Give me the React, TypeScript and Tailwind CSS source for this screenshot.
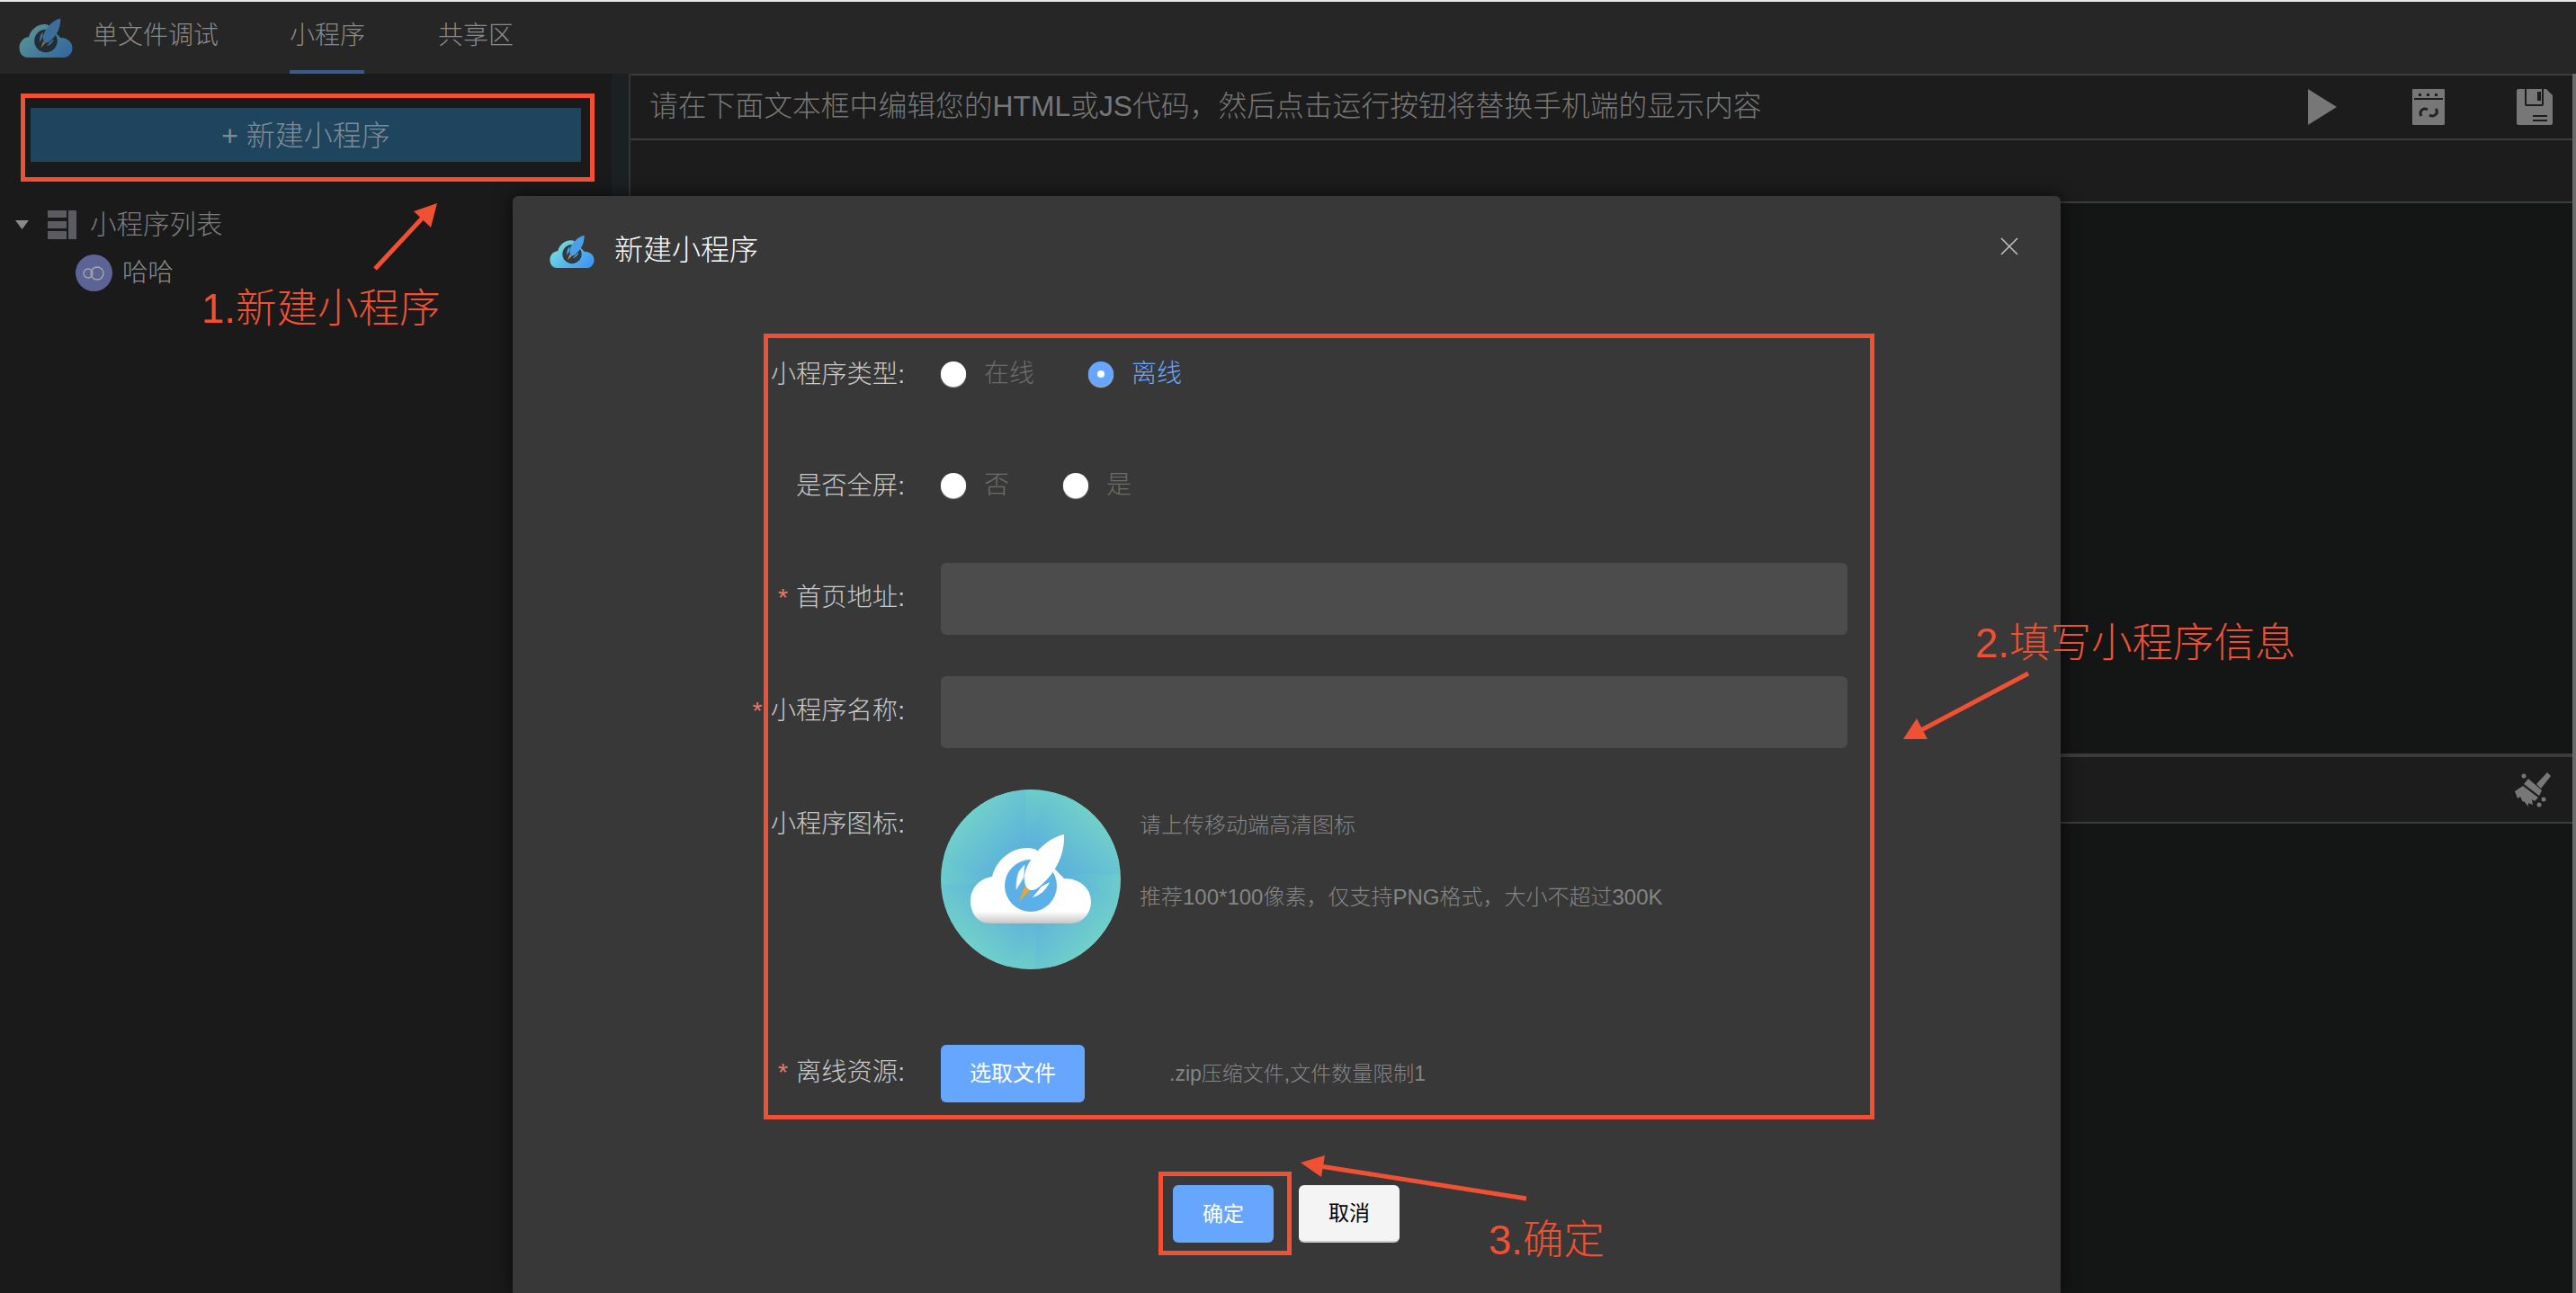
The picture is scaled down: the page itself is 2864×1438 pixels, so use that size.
import React from "react";

const CLOUD =
  "M55 149 C40 149 33 137 33 124 C33 110 43 99 57 97 C62 78 78 65 97 65 C100 65 104 66 106 67 L137 99 C155 99 167 110 167 125 C167 139 156 149 145 149 Z";
const ROCKET =
  "M137 50 C120 54 104 68 95 88 C92 96 92 104 96 110 C100 114 106 112 112 106 C128 92 138 72 137 50 Z";
const FIN_LEFT = "M93 84 L87 91 C84 99 84 105 84 111 L92 98 Z";
const FIN_RIGHT = "M102 120 C110 118 117 112 121 103 L112 108 Z";
const FLAME = "M87 125 L93 108 L99 112 Z";
const PETAL = "M3 75 C20 92 45 97 70 95 C82 95 92 97 100 100 C96 82 92 65 94 50 C94 30 95 15 94 2 L0 0 Z";

// small cloud logo used in the header and dialog title
const Logo = ({ id, className, hole }: { id: string; className: string; hole: string }) => (
  <svg viewBox="33 40 134 109" className={className}>
    <defs>
      <linearGradient id={id} x1="0" y1="0.2" x2="1" y2="0.8">
        <stop offset="0" stopColor="#7ee4d6" />
        <stop offset="0.55" stopColor="#58b4ec" />
        <stop offset="1" stopColor="#3d96f2" />
      </linearGradient>
    </defs>
    <path d={CLOUD} fill={`url(#${id})`} />
    <circle cx="100" cy="107" r="29" fill={hole} />
    <path d={ROCKET} fill="#4b9fe6" />
    <path d={FIN_LEFT} fill="#4b9fe6" />
    <path d={FIN_RIGHT} fill="#4b9fe6" />
    <path d={FLAME} fill="#e89a3c" />
  </svg>
);

const BigIcon = () => (
  <svg viewBox="0 0 200 200" className="w-[200px] h-[200px] shrink-0">
    <defs>
      <linearGradient id="petal" gradientUnits="userSpaceOnUse" x1="88" y1="92" x2="22" y2="30">
        <stop offset="0" stopColor="#57abe0" />
        <stop offset="1" stopColor="#72d2c8" />
      </linearGradient>
      <radialGradient id="discBase" cx="0.5" cy="0.5" r="0.5">
        <stop offset="0.2" stopColor="#57abe0" />
        <stop offset="1" stopColor="#6ccdca" />
      </radialGradient>
      <linearGradient id="cloudShade" x1="0" y1="0" x2="0" y2="1">
        <stop offset="0.84" stopColor="#ffffff" />
        <stop offset="1" stopColor="#c6c6c6" />
      </linearGradient>
      <clipPath id="disc">
        <circle cx="100" cy="100" r="100" />
      </clipPath>
    </defs>
    <g clipPath="url(#disc)">
      <rect width="200" height="200" fill="url(#discBase)" />
      <path d={PETAL} fill="url(#petal)" />
      <path d={PETAL} fill="url(#petal)" transform="rotate(90 100 100)" />
      <path d={PETAL} fill="url(#petal)" transform="rotate(180 100 100)" />
      <path d={PETAL} fill="url(#petal)" transform="rotate(270 100 100)" />
    </g>
    <path d={CLOUD} fill="url(#cloudShade)" />
    <circle cx="100" cy="107" r="29" fill="#5cb0e8" />
    <path d={FIN_LEFT} fill="#ffffff" stroke="#d4ebfa" strokeWidth="0.8" />
    <path d={FIN_RIGHT} fill="#ffffff" />
    <path d={ROCKET} fill="#ffffff" />
    <path d={FLAME} fill="#e2a63f" />
  </svg>
);

const Radio = ({ checked, label, className }: { checked?: boolean; label: string; className: string }) => (
  <div className={`flex items-center ${className}`}>
    <span
      className={`w-[28px] h-[28px] rounded-full flex items-center justify-center shadow-[0_1px_1px_#bbbbbb] ${
        checked ? "bg-[#66a6ff]" : "bg-white"
      }`}
    >
      {checked && <span className="w-[8px] h-[8px] rounded-full bg-white" />}
    </span>
    <span className={`ml-[20px] text-[28px] ${checked ? "text-[#66a6ff]" : "text-[#6c6c6c]"}`}>{label}</span>
  </div>
);

const Label = ({ text, required, lead }: { text: string; required?: boolean; lead: string }) => (
  <div className={`w-[476px] shrink-0 pr-[40px] text-right text-[28.3px] text-[#c9c9c9] ${lead}`}>
    {required && <span className="mr-[9px] text-[#ee7468]">*</span>}
    {text}:
  </div>
);

const App = () => {
  return (
    <div
      className="relative w-[2864px] h-[1438px] overflow-hidden bg-[#1a1a1a] flex flex-col font-light"
      style={{ fontFamily: '"Liberation Sans", "Noto Sans CJK SC", sans-serif' }}
    >
      <div className="h-[2px] bg-[#e8e8ea]" />
      {/* top nav */}
      <div className="h-[80px] bg-[#262626] flex">
        <Logo id="navLogo" hole="#22303a" className="ml-[20px] mt-[14px] w-[62px] h-[48px] opacity-60" />
        <div className="ml-[21px] w-[219px] leading-[76px] text-[28px] text-[#8a8a8a]">单文件调试</div>
        <div className="w-[83px] h-[80px] border-b-[4px] border-[#3a5a8c] leading-[76px] text-[28px] text-[#8a8a8a] whitespace-nowrap">小程序</div>
        <div className="ml-[82px] leading-[76px] text-[28px] text-[#8a8a8a]">共享区</div>
      </div>

      <div className="flex flex-1 min-h-0">
        {/* left tree */}
        <div className="w-[680px] flex flex-col">
          <div className="ml-[34px] mt-[38px] w-[612px] h-[60px] pt-[2px] bg-[#1f445e] flex items-center justify-center text-[32px] text-[#7d8c96]">
            + 新建小程序
          </div>
          <div className="mt-[52px] flex items-center h-[36px]">
            <svg viewBox="0 0 15 10" className="ml-[17px] w-[15px] h-[10px]">
              <path d="M0 0 H15 L7.5 10 Z" fill="#8a8a8a" />
            </svg>
            <svg viewBox="0 0 32 32" className="ml-[21px] w-[32px] h-[32px]">
              <path d="M0 0 H21 V8 H0 Z M0 12 H21 V20 H0 Z M0 23 H21 V32 H0 Z M23 0 H32 V32 H23 Z" fill="#5a5c62" />
            </svg>
            <span className="ml-[15px] text-[29.5px] text-[#7d7d7d]">小程序列表</span>
          </div>
          <div className="mt-[15px] flex items-center h-[40px]">
            <svg viewBox="0 0 41 41" className="ml-[84px] w-[41px] h-[41px]">
              <circle cx="20.5" cy="20.5" r="20.5" fill="#5c6496" />
              <circle cx="14" cy="21" r="5" fill="none" stroke="#a9a9a9" strokeWidth="1.3" />
              <circle cx="24" cy="21" r="7" fill="none" stroke="#a9a9a9" strokeWidth="1.3" />
            </svg>
            <span className="ml-[11px] text-[28.5px] text-[#8a8a8a]">哈哈</span>
          </div>
        </div>
        <div className="w-[19px] bg-[#1b2023]" />

        {/* editor panes */}
        <div className="flex-1 flex flex-col border-l-[2px] border-[#343434]">
          <div className="h-[2px] bg-[#3c3c3c]" />
          <div className="h-[70px] bg-[#1c1c1c] flex items-center pl-[21px] text-[31.8px] text-[#777777]">
            请在下面文本框中编辑您的HTML或JS代码，然后点击运行按钮将替换手机端的显示内容
            <svg viewBox="0 0 32 40" className="ml-auto w-[32px] h-[40px]">
              <path d="M0 0 L32 20 L0 40 Z" fill="#777777" />
            </svg>
            <svg viewBox="0 0 36 40" className="ml-[84px] w-[36px] h-[40px]">
              <path
                fillRule="evenodd"
                d="M1 0 H35 A1 1 0 0 1 36 1 V39 A1 1 0 0 1 35 40 H1 A1 1 0 0 1 0 39 V1 A1 1 0 0 1 1 0 Z M2 10 V12 H34 V10 Z M7 5 V8 H10 V5 Z M16 5 V8 H19 V5 Z M25 5 V8 H28 V5 Z"
                fill="#777777"
              />
              <path d="M10 30 C7 25 12 20 17 23 M26 22 C30 27 24 32 19 29" fill="none" stroke="#222222" strokeWidth="3" />
            </svg>
            <svg viewBox="0 0 40 40" className="ml-[80px] mr-[22px] w-[40px] h-[40px]">
              <path
                fillRule="evenodd"
                d="M2 0 H33 L40 7 V38 A2 2 0 0 1 38 40 H2 A2 2 0 0 1 0 38 V2 A2 2 0 0 1 2 0 Z M9 0 V17 A2 2 0 0 0 11 19 H28 A2 2 0 0 0 30 17 V0 H28 V17 H11 V0 Z M23 3 V13 H27 V3 Z M18 29 V31 H34 V29 Z M18 34 V36 H34 V34 Z"
                fill="#777777"
              />
            </svg>
          </div>
          <div className="h-[2px] bg-[#3c3c3c]" />
          <div className="h-[68px] bg-[#1c1c1c]" />
          <div className="h-[2px] bg-[#3c3c3c]" />
          <div className="h-[612px] bg-[#141515]" />
          <div className="h-[4px] bg-[#3c3c3c]" />
          <div className="h-[72px] bg-[#1c1c1c] flex items-center justify-end pr-[24px]">
            <svg viewBox="0 0 40 40" className="w-[40px] h-[40px]">
              <path d="M24 14 L36 1 L40 5 L29 19 Z" fill="#777777" />
              <path d="M15 8 L30 21 L27 27 L10 14 Z" fill="#777777" />
              <path d="M9 16 L26 29 L22 33 L19 31 L20 37 L15 35 L15 39 L10 33 L9 34 L6 28 L3 30 L0 22 Z" fill="#777777" />
              <circle cx="32" cy="31" r="2.5" fill="#777777" />
              <circle cx="27" cy="37" r="2.5" fill="#777777" />
              <circle cx="10" cy="5" r="2.5" fill="#777777" />
            </svg>
          </div>
          <div className="h-[2px] bg-[#3c3c3c]" />
          <div className="flex-1 bg-[#141515]" />
        </div>
        <div className="w-[4px] bg-[#6a6a6a]" />
      </div>

      {/* dialog */}
      <div className="absolute left-[570px] top-[218px] w-[1721px] h-[1220px] rounded-t-[6px] bg-[#383838] shadow-[0_0_20px_#000000aa] flex flex-col">
        <div className="relative mt-[40px] ml-[40px] flex items-center h-[40px]">
          <Logo id="dialogLogo" hole="#2f3a44" className="w-[52px] h-[40px]" />
          <span className="ml-[21px] text-[32px] text-white">新建小程序</span>
          <svg viewBox="0 0 20 20" className="absolute right-[47px] top-[6px] w-[20px] h-[20px]">
            <path d="M1 1 L19 19 M19 1 L1 19" stroke="#c0c0c0" strokeWidth="1.6" />
          </svg>
        </div>

        <div className="mt-[78px] flex h-[80px]">
          <Label text="小程序类型" lead="leading-[80px]" />
          <Radio label="在线" className="w-[164px]" />
          <Radio checked label="离线" className="" />
        </div>
        <div className="mt-[44px] flex h-[80px]">
          <Label text="是否全屏" lead="leading-[80px]" />
          <Radio label="否" className="w-[136px]" />
          <Radio label="是" className="" />
        </div>
        <div className="mt-[46px] flex h-[80px]">
          <Label text="首页地址" required lead="leading-[76px]" />
          <div className="w-[1008px] rounded-[6px] bg-[#4c4c4c]" />
        </div>
        <div className="mt-[46px] flex h-[80px]">
          <Label text="小程序名称" required lead="leading-[76px]" />
          <div className="w-[1008px] rounded-[6px] bg-[#4c4c4c]" />
        </div>
        <div className="mt-[46px] flex h-[200px]">
          <Label text="小程序图标" lead="leading-[76px]" />
          <BigIcon />
          <div className="ml-[21px] text-[24px] text-[#858585]">
            <div className="mt-[24px] leading-[32px]">请上传移动端高清图标</div>
            <div className="mt-[48px] leading-[32px]">推荐100*100像素，仅支持PNG格式，大小不超过300K</div>
          </div>
        </div>
        <div className="mt-[84px] flex h-[64px]">
          <Label text="离线资源" required lead="leading-[60px]" />
          <div className="w-[160px] rounded-[6px] bg-[#66a6ff] flex items-center justify-center text-[24px] font-normal text-white">选取文件</div>
          <div className="ml-[94px] text-[23px] leading-[64px] text-[#858585]">.zip压缩文件,文件数量限制1</div>
        </div>
        <div className="mt-[92px] ml-[734px] flex gap-[28px]">
          <div className="w-[112px] h-[64px] rounded-[6px] bg-[#66a6ff] flex items-center justify-center text-[23px] font-normal text-white">确定</div>
          <div className="w-[112px] h-[64px] rounded-[6px] bg-[#f4f4f4] border-b-[2px] border-[#cccccc] flex items-center justify-center text-[23px] font-normal text-black">取消</div>
        </div>
      </div>

      {/* red annotations */}
      <div className="absolute left-[23px] top-[104px] w-[638px] h-[98px] border-[5px] border-[#f15033]" />
      <div className="absolute left-[849px] top-[371px] w-[1235px] h-[874px] border-[5px] border-[#f15033]" />
      <div className="absolute left-[1288px] top-[1303px] w-[148px] h-[93px] border-[5px] border-[#f15033]" />
      <div className="absolute left-[224px] top-[314px] text-[45.5px] leading-[60px] text-[#f15033]">1.新建小程序</div>
      <div className="absolute left-[2196px] top-[686px] text-[45.5px] leading-[60px] text-[#f15033]">2.填写小程序信息</div>
      <div className="absolute left-[1655px] top-[1350px] text-[45.5px] leading-[60px] text-[#f15033]">3.确定</div>
      <svg viewBox="0 0 2864 1438" className="absolute left-0 top-0 w-[2864px] h-[1438px] pointer-events-none">
        <path d="M417 299 L470 242" stroke="#f15033" strokeWidth="5" />
        <path d="M486 226 L460 235 L479 253 Z" fill="#f15033" />
        <path d="M2255 749 L2136 812" stroke="#f15033" strokeWidth="5" />
        <path d="M2116 822 L2131 799 L2143 822 Z" fill="#f15033" />
        <path d="M1697 1333 L1468 1297" stroke="#f15033" strokeWidth="5" />
        <path d="M1446 1293 L1473 1285 L1469 1309 Z" fill="#f15033" />
      </svg>
    </div>
  );
};

export default App;
